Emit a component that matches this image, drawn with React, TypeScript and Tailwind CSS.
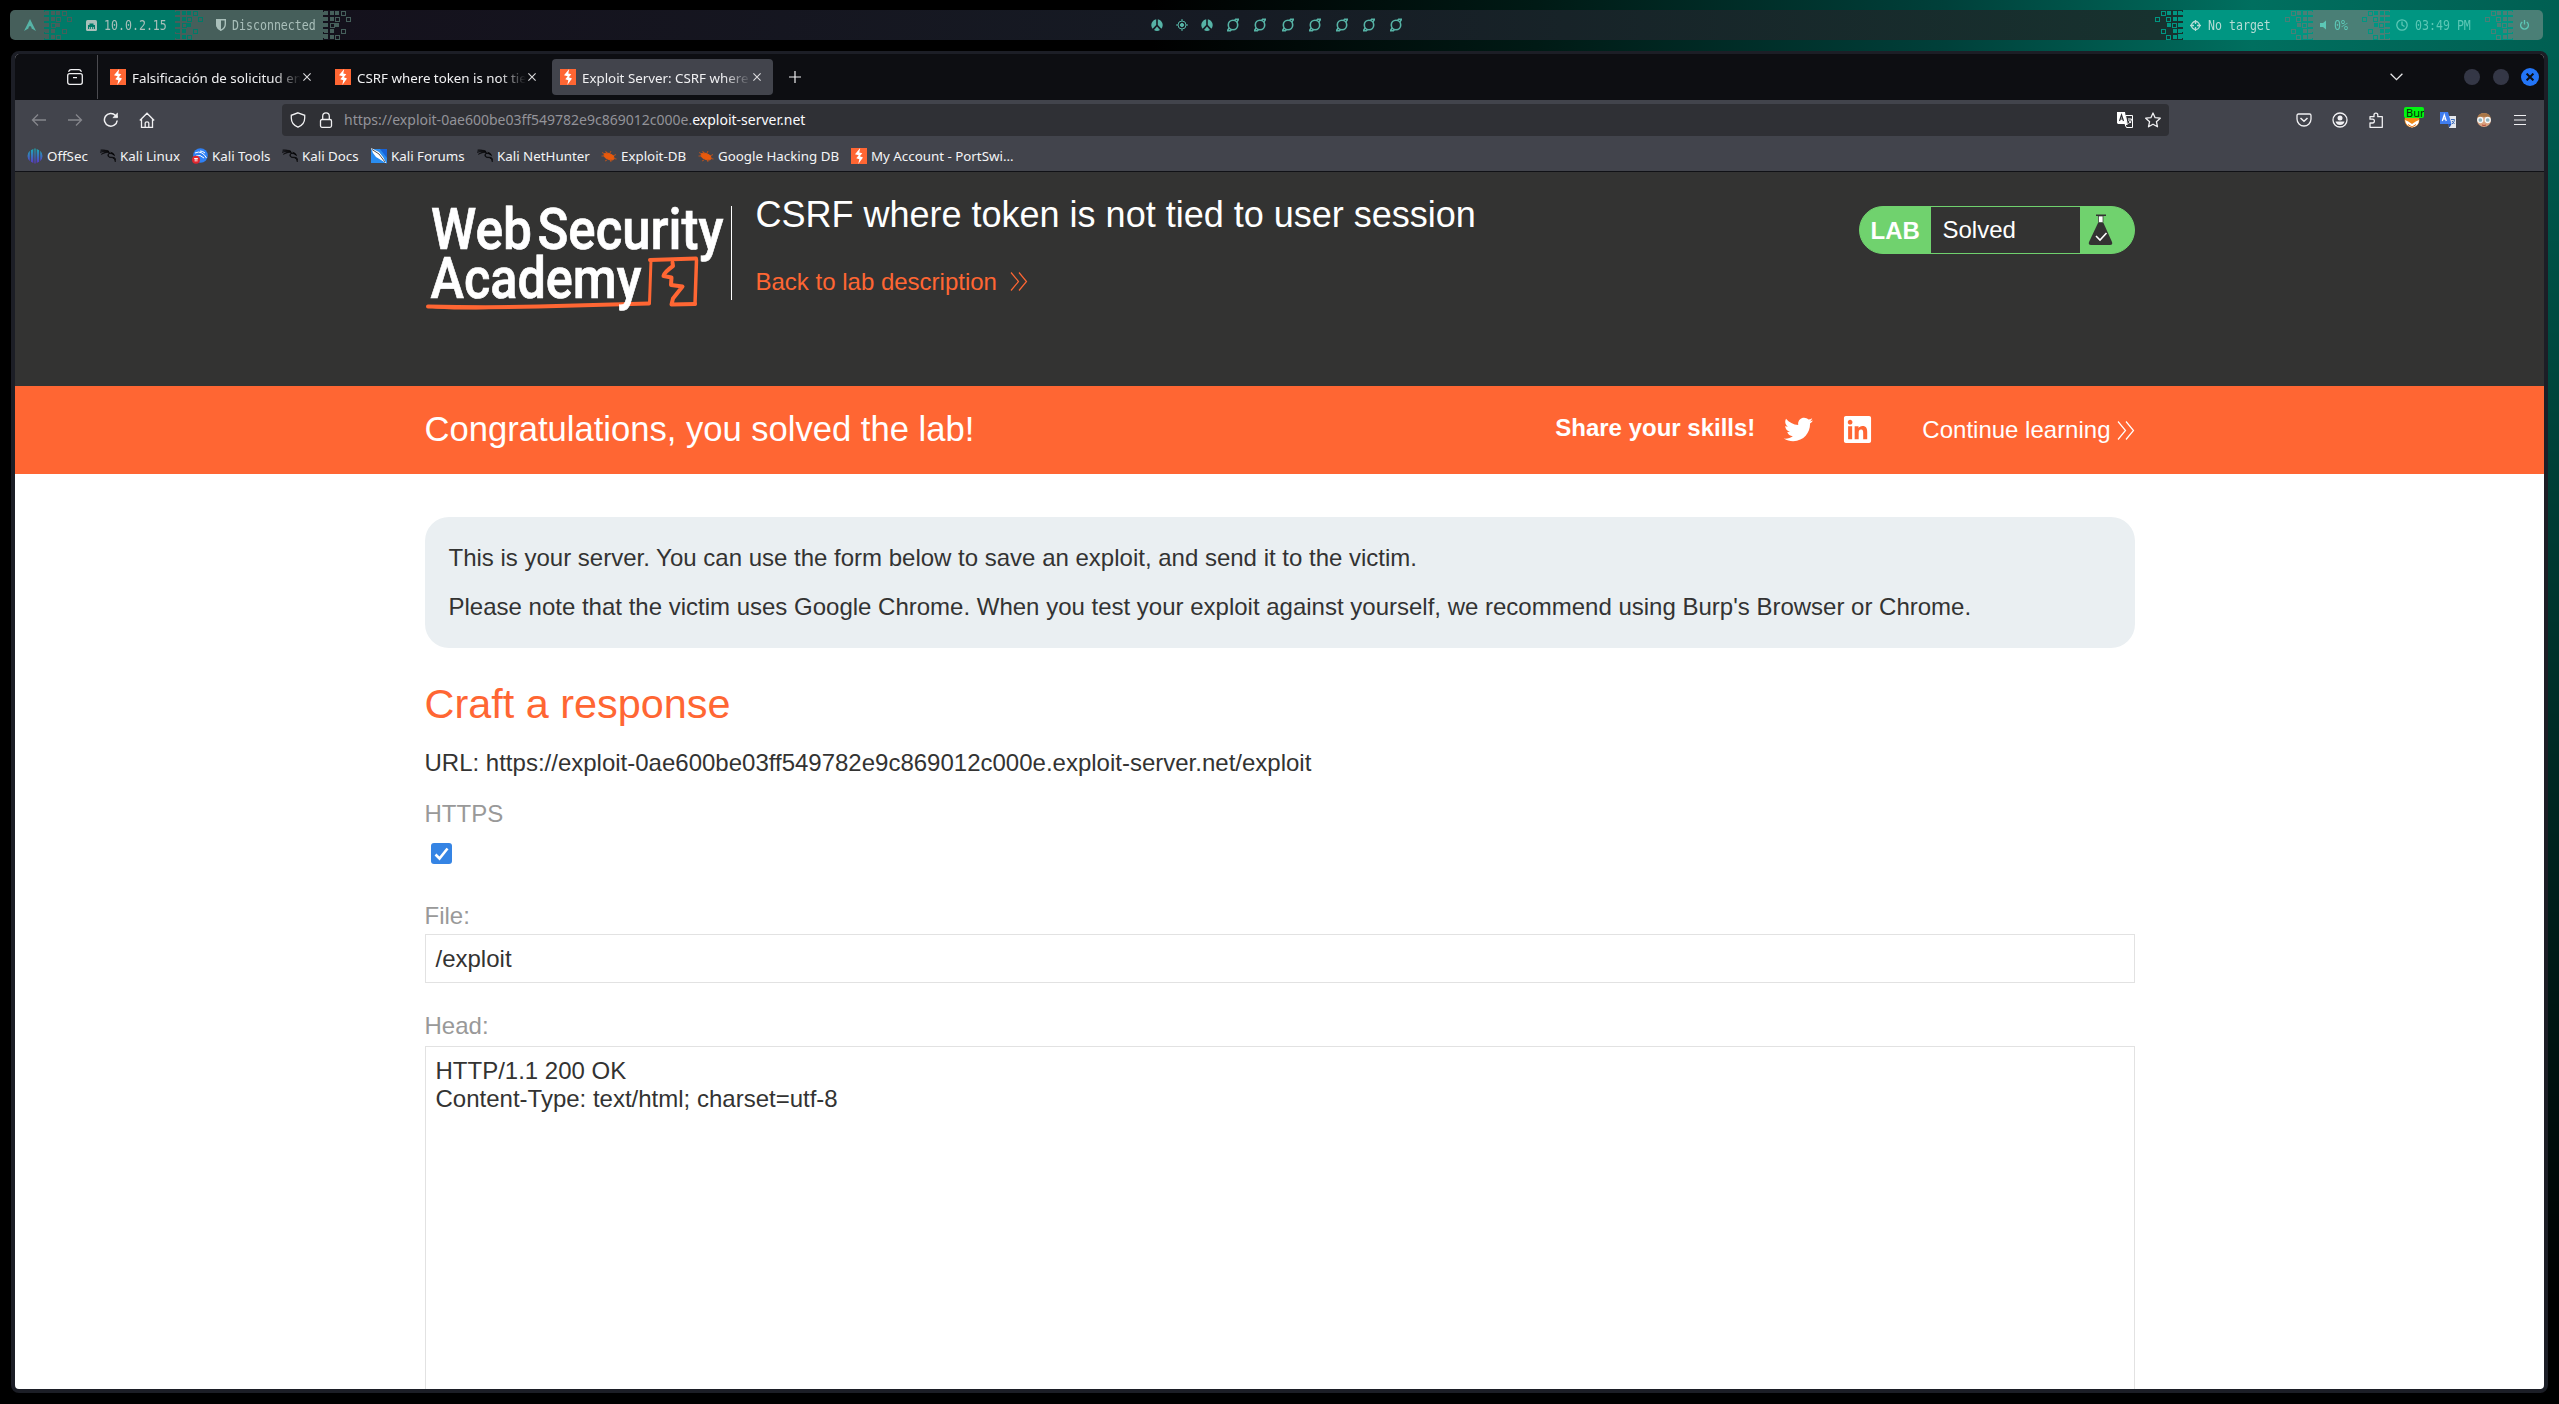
import React from "react";
import { FaTwitter, FaLinkedin } from "react-icons/fa";
import { SiKalilinux } from "react-icons/si";

/* Pixel pattern between two bar segments: 1 = filled, 2 = outlined */
const PATTERN = [
  [1, 1, 1, 2, 0],
  [1, 1, 2, 0, 2],
  [1, 2, 1, 0, 0],
  [1, 1, 0, 2, 0],
  [1, 1, 2, 0, 0],
];

function Dither({ from, to, flip }: { from: string; to: string; flip?: boolean }) {
  return (
    <svg width="28" height="30" viewBox="0 0 28 30" className="shrink-0" shapeRendering="crispEdges">
      <rect width="28" height="30" fill={to} />
      <g transform={flip ? "translate(28 0) scale(-1 1)" : undefined}>
        <rect x="0" y="2" width="5" height="3" fill={from} />
        <rect x="0" y="7" width="5" height="4" fill={from} />
        <rect x="0" y="13" width="5" height="4" fill={from} />
        <rect x="0" y="19" width="5" height="3" fill={from} />
        <rect x="0" y="24" width="5" height="4" fill={from} />
        {PATTERN.map((row, r) =>
          row.map((v, c) =>
            v === 1 ? (
              <rect key={`${r}-${c}`} x={c * 5.5 + 1} y={r * 6 + 1} width="4" height="4" fill={from} />
            ) : v === 2 ? (
              <rect key={`${r}-${c}`} x={c * 5.5 + 1.5} y={r * 6 + 1.5} width="4" height="4" fill="none" stroke={from} />
            ) : null,
          ),
        )}
      </g>
    </svg>
  );
}

function Mono({ children, className = "" }: { children: React.ReactNode; className?: string }) {
  return (
    <span
      className={
        "inline-block scale-y-[1.22] whitespace-pre font-['DejaVu_Sans_Mono',monospace] text-[11.6px] leading-[16px] " + className
      }
    >
      {children}
    </span>
  );
}

function Ring() {
  return (
    <svg width="14" height="14" viewBox="0 0 14 14" fill="none" stroke="#56b3a6" strokeWidth="1.6">
      <circle cx="7" cy="7" r="4.7" />
      <path d="M1 12.8h3.4l1-1.2M3.2 9.8 1.6 12.4M13 1.2H9.6l-1 1.2M10.8 4.2 12.4 1.6" />
    </svg>
  );
}

function Peace() {
  return (
    <svg width="12" height="12" viewBox="0 0 12 12" fill="#56b3a6">
      <path d="M5.2 0.2V6L1.6 9.8A6 6 0 0 1 5.2 .2ZM6.8 .2V6l3.6 3.8A6 6 0 0 0 6.8 .2ZM6 7.6 3 11c1.800 1.300 4.200 1.300 6 0Z" />
    </svg>
  );
}

function TopBar() {
  return (
    <div className="flex h-[30px] w-[2533px] overflow-hidden rounded-[5px]">
      <div className="flex w-[34px] items-center justify-center bg-[#465f5b] pl-1.5">
        <svg width="12" height="12" viewBox="0 0 12 12" fill="#56b3a6">
          <path d="M6 0 12 12 7.600 9.500Q7.600 7 6 7T4.400 9.500L0 12Z" />
        </svg>
      </div>
      <Dither from="#465f5b" to="#007a68" />
      <div className="flex w-[103px] items-center bg-[#007a68] pl-[14px] text-[#a9bfba]">
        <svg width="11" height="11" viewBox="0 0 11 11">
          <rect width="11" height="11" rx="1.5" fill="#a9bfba" />
          <path d="M2 9V5h1.500V3.500h4V5H9v4H7.800V7h-1v2h-.8V7H5v2h-.8V7h-1v2Z" fill="#007a68" />
        </svg>
        <Mono className="ml-[7px]">10.0.2.15</Mono>
      </div>
      <Dither from="#007a68" to="#465f5b" />
      <div className="flex w-[120px] items-center bg-[#465f5b] pl-[13px] text-[#a9bfba]">
        <svg width="10" height="12" viewBox="0 0 10 12">
          <path d="M.7.700h8.600V5c0 3-1.800 5-4.300 6.200C2.500 10 .7 8 .7 5Z" fill="none" stroke="#a9bfba" strokeWidth="1.400" />
          <path d="M0 0h5v12C2 10.500 0 8.500 0 5Z" fill="#a9bfba" />
        </svg>
        <Mono className="ml-[6px]">Disconnected</Mono>
      </div>
      <div className="flex flex-1 items-center bg-linear-to-r from-[#14111c] via-[#161b24] to-[#17322f]">
        <Dither from="#465f5b" to="#14111c" />
        <div className="ml-[800px] flex w-[252px] items-center justify-between">
          <Peace />
          <svg width="12" height="12" viewBox="0 0 12 12" fill="none" stroke="#56b3a6">
            <circle cx="6" cy="6" r="4" />
            <circle cx="6" cy="6" r="1.600" fill="#56b3a6" />
            <path d="M6 0v2M6 10v2M0 6h2M10 6h2" />
          </svg>
          <Peace />
          <Ring />
          <Ring />
          <Ring />
          <Ring />
          <Ring />
          <Ring />
          <Ring />
        </div>
      </div>
      <Dither from="#009682" to="#17322f" flip />
      <div className="flex w-[102px] items-center bg-[#009682] pl-[7px] text-[#b5dcd5]">
        <svg width="11" height="11" viewBox="0 0 11 11" fill="none" stroke="#b5dcd5" strokeWidth="1.300">
          <circle cx="5.500" cy="5.500" r="4" />
          <path d="M5.500 0v4M5.500 7v4M0 5.500h4M7 5.500h4" />
        </svg>
        <Mono className="ml-[7px]">No target</Mono>
      </div>
      <Dither from="#4a7f76" to="#009682" flip />
      <div className="flex w-[49px] items-center bg-[#4a7f76] pl-[7px] text-[#5cc7b6]">
        <svg width="6" height="10" viewBox="0 0 6 10" fill="#5cc7b6">
          <path d="M6 .5v9L3 7H0V3h3Z" />
        </svg>
        <Mono className="ml-[8px]">0%</Mono>
      </div>
      <Dither from="#009682" to="#4a7f76" flip />
      <div className="flex w-[95px] items-center bg-[#009682] pl-[6px] text-[#5cc7b6]">
        <svg width="12" height="12" viewBox="0 0 12 12" fill="none" stroke="#5cc7b6" strokeWidth="1.300">
          <circle cx="6" cy="6" r="5.200" />
          <path d="M6 2.500V6l2.500 1.500" />
        </svg>
        <Mono className="ml-[7px]">03:49 PM</Mono>
      </div>
      <Dither from="#4a7f76" to="#009682" flip />
      <div className="flex w-[30px] items-center bg-[#4a7f76] pl-[7px]">
        <svg width="9" height="10" viewBox="0 0 9 10" fill="none" stroke="#5cc7b6" strokeWidth="1.300">
          <path d="M2.300 2A3.900 3.900 0 1 0 6.700 2M4.500 0v4.500" />
        </svg>
      </div>
    </div>
  );
}

function PortIcon() {
  return (
    <svg width="16" height="16" viewBox="0 0 16 16" className="shrink-0">
      <rect width="16" height="16" fill="#ff6633" />
      <path d="M9.200 0 4 6.200 7.700 7.300 5.300 10.300 8.300 11.200 7.300 16 12 9.400 8.800 8.200 11.300 5.300 8.300 4.500Z" fill="#fff" />
    </svg>
  );
}

function Tab({ title, active }: { title: string; active?: boolean }) {
  return (
    <div className={"flex h-9 w-[221px] items-center rounded-[4px] pl-2 " + (active ? "bg-[#42444c]" : "")}>
      <PortIcon />
      <span className="ml-[6px] mt-[2px] w-[169px] overflow-hidden whitespace-nowrap text-[13.33px] leading-5 [mask-image:linear-gradient(to_right,#000_84%,transparent)]">
        {title}
      </span>
      <svg width="8" height="8" viewBox="0 0 8 8" stroke="#dcdcde" strokeWidth="1.100" className="ml-[2px] shrink-0">
        <path d="M.4.400l7.200 7.200M7.600.400.400 7.600" />
      </svg>
    </div>
  );
}

function TabStrip() {
  return (
    <div className="flex h-[46px] items-center bg-[#0d0e12] text-[#f0f0f2]">
      <div className="flex h-11 w-[83px] items-center justify-end border-r border-[#4b4b50] pr-[14px]">
        <svg width="16" height="16" viewBox="0 0 16 16" fill="none" stroke="#f0f0f2" strokeWidth="1.300">
          <rect x=".7" y="4.700" width="14.600" height="10.600" rx="2" />
          <path d="M1.500 2.700Q2.500 .7 4 .7h8q1.500 0 2.500 2M6 8.700h4" />
        </svg>
      </div>
      <div className="ml-1 flex gap-1">
        <Tab title="Falsificación de solicitud entre sitios" />
        <Tab title="CSRF where token is not tied to user" />
        <Tab title="Exploit Server: CSRF where token" active />
      </div>
      <svg width="12" height="12" viewBox="0 0 12 12" stroke="#f0f0f2" strokeWidth="1.200" className="ml-4">
        <path d="M6 0v12M0 6h12" />
      </svg>
      <svg width="13" height="8" viewBox="0 0 13 8" fill="none" stroke="#e6e6e8" strokeWidth="1.300" className="ml-auto mr-[61px]">
        <path d="M.6.800 6.500 6.700 12.400.800" />
      </svg>
      <div className="flex items-center gap-[13px] pr-[5px]">
        <div className="size-4 rounded-full bg-[#343746]" />
        <div className="size-4 rounded-full bg-[#343746]" />
        <div className="ml-[-1px] flex size-[18px] items-center justify-center rounded-full bg-[#2375f7]">
          <svg width="8" height="8" viewBox="0 0 8 8" stroke="#0d0e12" strokeWidth="2">
            <path d="M.6.600l6.800 6.800M7.400.600.600 7.400" />
          </svg>
        </div>
      </div>
    </div>
  );
}

function Cell({ children }: { children: React.ReactNode }) {
  return <div className="flex w-9 shrink-0 items-center justify-center">{children}</div>;
}

const line = { width: 16, height: 16, viewBox: "0 0 16 16", fill: "none", stroke: "#f0f0f2", strokeWidth: 1.3 };

function NavBar() {
  return (
    <div className="flex h-9 items-center pl-[6px] pt-1">
      <Cell>
        <svg {...line} stroke="#85868c">
          <path d="M15 8H1.500M7 2.500 1.500 8 7 13.500" />
        </svg>
      </Cell>
      <Cell>
        <svg {...line} stroke="#85868c">
          <path d="M1 8h13.500M9 2.500 14.500 8 9 13.500" />
        </svg>
      </Cell>
      <Cell>
        <svg {...line} strokeWidth="1.500">
          <path d="M14.200 8.500A6.400 6.400 0 1 1 12.500 3.400L14.500 5.300" />
          <path d="M14.500 1v4.700H9.800Z" fill="#f0f0f2" strokeWidth=".6" />
        </svg>
      </Cell>
      <Cell>
        <svg {...line}>
          <path d="M.8 8.500 8 1.200l7.200 7.300M2.500 7v8.300h11V7M6.200 15.300V11q0-1.200 1.800-1.200T9.800 11v4.300" />
        </svg>
      </Cell>
      <div className="ml-[117px] flex h-8 w-[1887px] items-center rounded-[4px] bg-[#2f3035] pl-2">
        <svg {...line}>
          <path d="M8 .8 14.700 3.300V6c0 4.500-3 7.700-6.700 9.200C4.300 13.700 1.300 10.500 1.300 6V3.300Z" />
        </svg>
        <svg {...line} className="ml-3">
          <rect x="2.500" y="7.500" width="11" height="7.800" rx="1.500" />
          <path d="M4.700 7.500V4.200a3.300 3.300 0 0 1 6.600 0v3.300" />
        </svg>
        <span className="ml-[10px] whitespace-nowrap text-[14px] leading-5 text-[#939399]">
          https://exploit-0ae600be03ff549782e9c869012c000e.<span className="text-[#fbfbfe]">exploit-server.net</span>
        </span>
        <svg width="16" height="16" viewBox="0 0 16 16" className="ml-auto">
          <path d="M0 0h8l2 12H1L0 11Z" fill="#fff" />
          <path d="M8.500 3.500h7v12h-6l-1.500-3h2.300Z" fill="none" stroke="#fff" />
          <path d="m2.500 9 2-6 2 6M3.200 7h2.600" stroke="#2f3035" fill="none" strokeWidth="1.200" />
          <path d="M11 7h3.500q0 3-3 4.500M11.500 8l2.500 3" stroke="#fff" fill="none" />
        </svg>
        <svg {...line} className="ml-3 mr-2">
          <path
            d="m8 1 2.100 4.700 5.200.500-3.900 3.500 1.100 5.100L8 12.200l-4.500 2.600 1.100-5.100L.7 6.200l5.200-.5Z"
            strokeLinejoin="round"
          />
        </svg>
      </div>
      <div className="ml-auto flex pr-[6px]">
        <Cell>
          <svg {...line}>
            <path d="M2.500 2h11q1.500 0 1.500 1.500V7A7 7 0 0 1 1 7V3.500Q1 2 2.500 2Z" />
            <path d="m4.500 6 3.500 3.300L11.500 6" strokeWidth="1.500" />
          </svg>
        </Cell>
        <Cell>
          <svg {...line}>
            <circle cx="8" cy="8" r="7" />
            <circle cx="8" cy="6" r="2.500" fill="#f0f0f2" stroke="none" />
            <path d="M3.500 9.500h9q-1 3.500-4.500 3.500T3.500 9.500Z" fill="#f0f0f2" stroke="none" />
          </svg>
        </Cell>
        <Cell>
          <svg {...line}>
            <path
              d="M2 15.300V11h2.500a1.900 1.900 0 0 0 0-3.800H2V4.700h4V3a1.900 1.900 0 0 1 3.800 0v1.700h4.500v10.600Z"
              strokeLinejoin="round"
            />
          </svg>
        </Cell>
        <Cell>
          <div className="relative size-4">
            <svg width="16" height="16" viewBox="0 0 16 16">
              <circle cx="8" cy="8" r="7.500" fill="#f08a18" />
              <path d="M1 8q3 2 7 2t7-2q0 6-7 7.500Q2 14 1 8Z" fill="#fff" />
              <path d="M3 6h10l-2 4-3 2-3-2Z" fill="#f08a18" />
              <path d="M4 12.500 8 15l4-2.500" stroke="#e07010" fill="none" />
            </svg>
            <span className="absolute left-0 -top-[5px] h-[11px] w-5 overflow-hidden rounded-[2px] bg-[#00f610] pl-[2px] text-[11px] leading-[11px] text-[#062a06]">
              Bur
            </span>
          </div>
        </Cell>
        <Cell>
          <svg width="16" height="16" viewBox="0 0 16 16">
            <path d="M8 4h8v12H9Z" fill="#e4e7ec" />
            <path d="M0 0h8l3.500 12H0Z" fill="#3f7df0" />
            <path d="m2.300 9 2-6 2 6M3 7h2.600" stroke="#fff" fill="none" strokeWidth="1.200" />
            <path d="M11 7.500h3.500q0 3-2.500 4.500M12 9l2.500 3" stroke="#3f6db8" fill="none" />
            <path d="m8 12h3.500L9.500 15.500Z" fill="#1c4fb0" />
          </svg>
        </Cell>
        <Cell>
          <svg width="16" height="16" viewBox="0 0 16 16">
            <circle cx="8" cy="8" r="7" fill="#d9a27e" />
            <path d="M1.300 7Q1.500 1 8 1t6.700 6Q12 4 8 5 4 4 1.300 7Z" fill="#a87647" />
            <circle cx="4.300" cy="8" r="2.500" fill="#8fb3bd" stroke="#f4f7f8" strokeWidth="1.300" />
            <circle cx="11.700" cy="8" r="2.500" fill="#8fb3bd" stroke="#f4f7f8" strokeWidth="1.300" />
            <path d="M6 13q2 1 4 0" stroke="#b4473a" fill="none" />
          </svg>
        </Cell>
        <Cell>
          <svg width="12" height="12" viewBox="0 0 12 12" stroke="#f0f0f2" strokeWidth="1.200">
            <path d="M0 1.500h12M0 6h12M0 10.500h12" />
          </svg>
        </Cell>
      </div>
    </div>
  );
}

function Dragon() {
  return <SiKalilinux size={16} color="#08080a" stroke="#08080a" strokeWidth={0.9} />;
}

function Bug() {
  return (
    <svg width="16" height="16" viewBox="0 0 16 16" stroke="#e8590c" fill="#e8590c">
      <ellipse cx="8" cy="8.500" rx="5.200" ry="2.800" transform="rotate(25 8 8.500)" />
      <path d="M1 4.500 4 6M.5 8 3.500 8M6 5 4.500 3M9 5l1-2M12 8l3-1.500M12.500 10.500l3 .5M6 12l-2 1M9.500 12l.5 2" strokeWidth=".7" />
    </svg>
  );
}

function Bookmark({ icon, label, width }: { icon: React.ReactNode; label: string; width: string }) {
  return (
    <div className={"flex shrink-0 items-center gap-1 whitespace-nowrap " + width}>
      <span className="flex size-4 shrink-0 items-center justify-center">{icon}</span>
      {label}
    </div>
  );
}

function Bookmarks() {
  return (
    <div className="flex h-[35px] items-center pl-3 pt-1 text-[13.33px] leading-5 text-[#f4f4f6]">
      <Bookmark
        width="w-[73px]"
        label="OffSec"
        icon={
          <svg width="16" height="16" viewBox="0 0 16 16">
            <defs>
              <linearGradient id="offsec" x1="0" y1="0" x2="0" y2="1">
                <stop offset="0" stopColor="#19b0b8" />
                <stop offset="1" stopColor="#5a35c8" />
              </linearGradient>
            </defs>
            <path
              d="M7.400 .5h1.200v15H7.400ZM6.300 1v14L3.900 13.800V2.200ZM9.700 1v14l2.400-1.200V2.200ZM2.800 2.800v10.400Q.5 11 .5 8t2.300-5.200ZM13.200 2.800v10.400q2.300-2.200 2.300-5.200t-2.300-5.200Z"
              fill="url(#offsec)"
            />
          </svg>
        }
      />
      <Bookmark width="w-[92px]" label="Kali Linux" icon={<Dragon />} />
      <Bookmark
        width="w-[90px]"
        label="Kali Tools"
        icon={
          <svg width="16" height="16" viewBox="0 0 16 16">
            <circle cx="8.500" cy="7.500" r="7.300" fill="#2f80f5" />
            <path d="M3 5q4-2 7 0t4.500 5M4 8q4-2 8 2M8 3q3 0 5 2" stroke="#fff" strokeWidth="1" fill="none" />
            <circle cx="4" cy="11.800" r="4" fill="#e0262e" />
            <path d="M2.200 10.500h3.600M3.200 10.500v3M4.900 10.500v3" stroke="#fff" strokeWidth=".9" />
          </svg>
        }
      />
      <Bookmark width="w-[89px]" label="Kali Docs" icon={<Dragon />} />
      <Bookmark
        width="w-[106px]"
        label="Kali Forums"
        icon={
          <svg width="16" height="16" viewBox="0 0 16 16">
            <rect y="1" width="16" height="14" fill="#2a8df0" />
            <path d="M16 1v9L9 1Z" fill="#1763d8" />
            <path d="M0 0 8 4l4 5 3.500 6.500L10 12l-5-3-3-4Z" fill="#fff" />
            <path d="M1 1.500 8 6l6 8" stroke="#222" strokeWidth=".8" fill="none" />
          </svg>
        }
      />
      <Bookmark width="w-[124px]" label="Kali NetHunter" icon={<Dragon />} />
      <Bookmark width="w-[97px]" label="Exploit-DB" icon={<Bug />} />
      <Bookmark width="w-[153px]" label="Google Hacking DB" icon={<Bug />} />
      <Bookmark width="w-[170px]" label="My Account - PortSwi…" icon={<PortIcon />} />
    </div>
  );
}

function Chevrons({ className = "" }: { className?: string }) {
  return (
    <svg width="18" height="19" viewBox="0 0 18 19" fill="none" stroke="currentColor" strokeWidth="1.200" className={className}>
      <path d="M1 .5 8.500 9.500 1 18.500M9 .5l7.500 9L9 18.500" />
    </svg>
  );
}

function Logo() {
  return (
    <svg width="304" height="116" viewBox="0 0 304 116" className="shrink-0">
      <g fill="none" stroke="#ff6633" strokeLinecap="round" strokeLinejoin="round">
        <path d="M3 106.500q60 1.500 110 0t111-3" strokeWidth="4" />
        <path d="M4 106.500q20 3 60 1.500" strokeWidth="2" />
        <path d="M224.500 103 226 60" strokeWidth="3" />
        <path d="M225 60l46-1.500" strokeWidth="4" />
        <path d="M271.500 60 270 104" strokeWidth="3.500" />
        <path d="M270 104l-23.500 .5 1.500-6 9.500-12-11.500-1.500 .5-7.500-8-1.500q1-4 9.500-10l-.5-3.500" strokeWidth="4" />
      </g>
      <g
        fill="#fff"
        stroke="#fff"
        strokeWidth=".7"
        fontFamily="Roboto, sans-serif"
        fontWeight="500"
        fontSize="57"
      >
        <text x="6" y="49" textLength="101" lengthAdjust="spacingAndGlyphs">Web</text>
        <text x="112.500" y="49" textLength="186" lengthAdjust="spacingAndGlyphs">Security</text>
        <text x="5.500" y="98" textLength="211" lengthAdjust="spacingAndGlyphs">Academy</text>
      </g>
    </svg>
  );
}

function LabHeader() {
  return (
    <header className="h-[214px] bg-[#333332]">
      <div className="mx-auto flex h-full w-[1710px]">
        <div className="mt-[34px] flex h-[94px] w-[307px] shrink-0 border-r border-white">
          <div className="-mt-[6px]">
            <Logo />
          </div>
        </div>
        <div className="ml-6 pt-[22px]">
          <h1 className="text-[36px] leading-[42px] text-white">CSRF where token is not tied to user session</h1>
          <div className="mt-[32px] flex items-center text-[24px] leading-7 text-[#ff6633]">
            Back to lab description
            <Chevrons className="ml-[13px] -mt-px" />
          </div>
        </div>
        <div className="ml-auto mt-[34px] flex h-12 w-[276px] overflow-hidden rounded-full border border-[#70d26e] bg-[#70d26e] text-[24px] leading-[48px] text-white">
          <div className="w-[71px] pl-[11px] font-bold">LAB</div>
          <div className="w-[149px] bg-[#333332] pl-[12px] leading-[46px]">Solved</div>
          <svg width="26" height="32" viewBox="0 0 26 32" className="ml-2 mt-[7px]">
            <path d="M10 9 1 28q-1 3 2 3h19q3 0 2-3L15.500 9Z" fill="#333332" />
            <path d="M8 1.300h10" stroke="#333332" strokeWidth="1.500" />
            <rect x="10.500" y="2" width="4.500" height="6.500" fill="#fff" stroke="#333332" strokeWidth=".7" />
            <path d="m8 22 4 4 6.500-7" stroke="#fff" strokeWidth="1.600" fill="none" />
          </svg>
        </div>
      </div>
    </header>
  );
}

function Banner() {
  return (
    <div className="h-[88px] bg-[#ff6633] text-white">
      <div className="mx-auto flex h-full w-[1710px] items-center">
        <p className="-mt-[2px] text-[34.6px] leading-[42px]">Congratulations, you solved the lab!</p>
        <p className="-mt-[5px] ml-auto text-[24px] font-bold leading-7">Share your skills!</p>
        <FaTwitter size={29} className="-mt-px ml-[29px]" />
        <FaLinkedin size={31} className="-mt-px ml-[29px]" />
        <p className="ml-[49px] text-[24px] leading-7">Continue learning</p>
        <Chevrons className="ml-[6px]" />
      </div>
    </div>
  );
}

function ExploitForm() {
  return (
    <main className="mx-auto flex w-[1710px] flex-col pt-[43px] text-[24px] leading-7 text-[#333332]">
      <section className="flex h-[131px] flex-col gap-[21px] rounded-[24px] bg-[#eaeff2] pl-6 pt-[27px]">
        <p>This is your server. You can use the form below to save an exploit, and send it to the victim.</p>
        <p>
          Please note that the victim uses Google Chrome. When you test your exploit against yourself, we recommend using Burp's
          Browser or Chrome.
        </p>
      </section>
      <h2 className="mt-[32px] text-[41.4px] leading-[48px] text-[#ff6633]">Craft a response</h2>
      <p className="mt-[21px]">URL: https://exploit-0ae600be03ff549782e9c869012c000e.exploit-server.net/exploit</p>
      <label className="mt-[23px] text-[#999]">HTTPS</label>
      <div className="ml-[6px] mt-[15px] flex size-[21px] items-center justify-center rounded-[3px] bg-[#3584e4]">
        <svg width="15" height="14" viewBox="0 0 15 14" fill="none" stroke="#fff" strokeWidth="2.600">
          <path d="m1.500 7.500 4 4 8-10" />
        </svg>
      </div>
      <label className="mt-[38px] text-[#999]">File:</label>
      <div className="mt-1 h-[49px] border border-[#e2e2e2] pl-[10px] pt-[10px]">/exploit</div>
      <label className="mt-[29px] text-[#999]">Head:</label>
      <div className="mt-[6px] h-[500px] whitespace-pre border border-[#e2e2e2] pl-[10px] pt-[10px]">
        {"HTTP/1.1 200 OK\nContent-Type: text/html; charset=utf-8"}
      </div>
    </main>
  );
}

export default function App() {
  return (
    <div className="h-[1404px] w-[2559px] overflow-hidden bg-[linear-gradient(to_bottom,transparent_0,transparent_50px,#000_1300px),linear-gradient(to_right,#000_45%,#001a15_60%,#00403a_76%,#006f5f_88%,#005f52)] pl-[10px] pt-[10px]">
      <TopBar />
      <div className="ml-px mt-[11px] h-[1342px] w-[2537px] overflow-hidden rounded-[8px] border-4 border-t-[3px] border-[#1c1e26] bg-white">
        <div className="font-['Noto_Sans',sans-serif]">
          <TabStrip />
          <div className="h-[72px] border-b border-[#101116] bg-[#42444c]">
            <NavBar />
            <Bookmarks />
          </div>
        </div>
        <div className="font-['Liberation_Sans',Arial,sans-serif]">
          <LabHeader />
          <Banner />
          <ExploitForm />
        </div>
      </div>
    </div>
  );
}
